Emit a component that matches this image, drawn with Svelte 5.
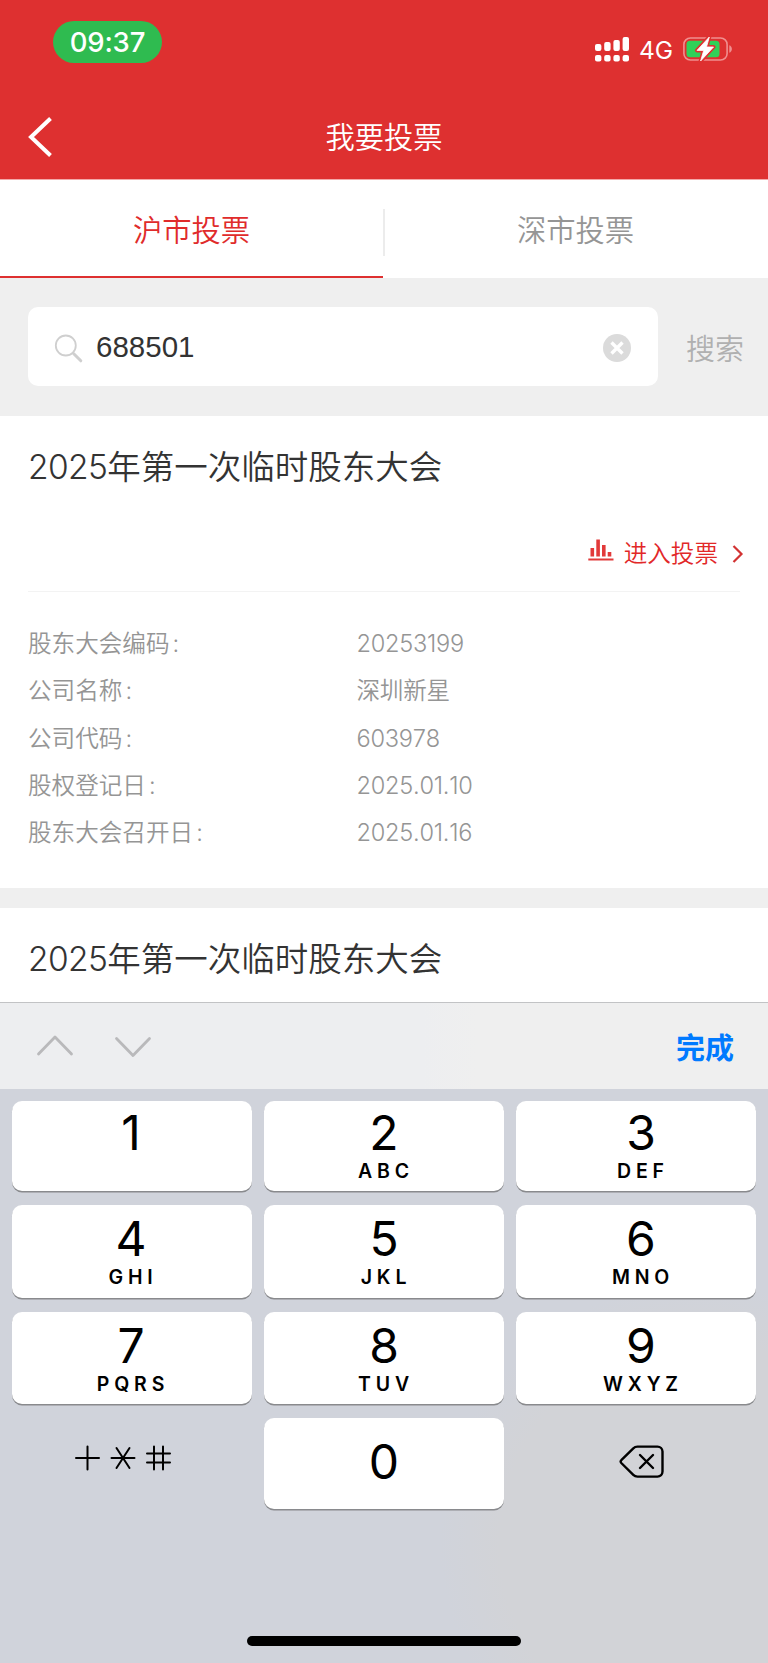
<script lang="ts">
  interface Meeting {
    year: string;
    name: string;
    details: { label: string; value: string }[];
  }

  const tabs = ["沪市投票", "深市投票"];

  const meetings: Meeting[] = [
    {
      year: "2025",
      name: "年第一次临时股东大会",
      details: [
        { label: "股东大会编码", value: "20253199" },
        { label: "公司名称", value: "深圳新星" },
        { label: "公司代码", value: "603978" },
        { label: "股权登记日", value: "2025.01.10" },
        { label: "股东大会召开日", value: "2025.01.16" },
      ],
    },
    { year: "2025", name: "年第一次临时股东大会", details: [] },
  ];

  const keys = [
    { digit: "1", letters: "" },
    { digit: "2", letters: "ABC" },
    { digit: "3", letters: "DEF" },
    { digit: "4", letters: "GHI" },
    { digit: "5", letters: "JKL" },
    { digit: "6", letters: "MNO" },
    { digit: "7", letters: "PQRS" },
    { digit: "8", letters: "TUV" },
    { digit: "9", letters: "WXYZ" },
  ];

  let activeTab = $state(0);
  let code = $state("688501");

  function press(digit: string) {
    code += digit;
  }
</script>

<div class="screen">
  <header>
    <div class="status-bar">
      <span class="clock">09:37</span>
      <div class="status-icons">
        <svg class="signal" width="35" height="25" viewBox="0 0 35 25" fill="#fff">
          <rect x="0" y="7" width="6.4" height="7" rx="2" />
          <rect x="9.2" y="5" width="6.4" height="9" rx="2" />
          <rect x="18.4" y="3" width="6.4" height="11" rx="2" />
          <rect x="27.6" y="0" width="6.4" height="14" rx="2" />
          <rect x="0" y="18" width="6.4" height="6.4" rx="2" />
          <rect x="9.2" y="18" width="6.4" height="6.4" rx="2" />
          <rect x="18.4" y="18" width="6.4" height="6.4" rx="2" />
          <rect x="27.6" y="18" width="6.4" height="6.4" rx="2" />
        </svg>
        <span class="network">4G</span>
        <svg class="battery" width="50" height="26" viewBox="0 0 50 26">
          <rect x="0.9" y="2" width="43.2" height="22" rx="6.5" fill="none" stroke="#f08f8f" stroke-width="1.6" />
          <path d="M46.3 9.3c1.6.5 2.6 2 2.6 3.7s-1 3.2-2.6 3.7z" fill="#f08f8f" />
          <rect x="3.5" y="4.8" width="33" height="16.4" rx="3.5" fill="#30d158" />
          <path d="M26.3 1 14 14.4h6.7L17.6 25l12.9-14h-7z" fill="#fff" stroke="#de3030" stroke-width="4" stroke-linejoin="round" />
          <path d="M26.3 1 14 14.4h6.7L17.6 25l12.9-14h-7z" fill="#fff" stroke="#fff" stroke-width="0.8" stroke-linejoin="round" />
        </svg>
      </div>
    </div>
    <div class="nav-bar">
      <button class="back" aria-label="返回">
        <svg width="26" height="42" viewBox="0 0 26 42" fill="none" stroke="#fff" stroke-width="4">
          <path d="M23.5 2.5 4 21l19.5 18.5" />
        </svg>
      </button>
      <h1>我要投票</h1>
    </div>
  </header>

  <nav class="tabs">
    {#each tabs as tab, i}
      <button class="tab" class:active={activeTab === i} onclick={() => (activeTab = i)}>
        {tab}
      </button>
    {/each}
  </nav>

  <div class="search">
    <div class="search-box">
      <svg class="magnifier" width="30" height="30" viewBox="0 0 30 30" fill="none" stroke="#cfcfcf">
        <circle cx="11.8" cy="11.5" r="10" stroke-width="1.8" />
        <path d="M19.5 19.5 26.8 26.8" stroke-width="3" stroke-linecap="round" />
      </svg>
      <span class="query">{code}</span>
      <button class="clear" aria-label="清除" onclick={() => (code = "")}>
        <svg width="28" height="28" viewBox="0 0 28 28">
          <circle cx="14" cy="14" r="14" fill="#dbdbdb" />
          <path d="m8.5 8.5 11 11m0-11-11 11" stroke="#fff" stroke-width="3.4" />
        </svg>
      </button>
    </div>
    <button class="search-button">搜索</button>
  </div>

  <main>
    {#each meetings as meeting}
      <article>
        <h2><span class="year">{meeting.year}</span>{meeting.name}</h2>
        {#if meeting.details.length}
          <div class="enter">
            <svg class="chart" width="26" height="24" viewBox="0 0 26 24" fill="#e23a3a">
              <rect x="2.5" y="9" width="3.6" height="8.5" />
              <rect x="8.3" y="0.5" width="3.6" height="17" />
              <rect x="14" y="6" width="3.6" height="11.5" />
              <rect x="19.7" y="13" width="3.6" height="4.5" />
              <rect x="0.3" y="19.5" width="25.2" height="2" />
            </svg>
            <span>进入投票</span>
            <svg class="arrow" width="12" height="20" viewBox="0 0 12 20" fill="none" stroke="#d23232" stroke-width="2.2">
              <path d="m1.5 2 8 8-8 8" />
            </svg>
          </div>
          <dl>
            {#each meeting.details as row}
              <div class="row">
                <dt>{row.label}<span class="colon">:</span></dt>
                <dd>{row.value}</dd>
              </div>
            {/each}
          </dl>
        {/if}
      </article>
    {/each}
  </main>

  <section class="keyboard">
    <div class="toolbar">
      <svg width="116" height="24" viewBox="0 0 116 24" fill="none" stroke="#b9b9bb" stroke-width="2.8" stroke-linecap="round" stroke-linejoin="round">
        <path d="M2.5 20 19 3l16.5 17" />
        <path d="M80.5 4.5 97 21.5l16.5-17" />
      </svg>
      <button class="done">完成</button>
    </div>
    <div class="pad">
      {#each keys as key}
        <button class="key" onclick={() => press(key.digit)}>
          <span class="digit">{key.digit}</span>
          <span class="letters">{key.letters}</span>
        </button>
      {/each}
      <button class="key plain symbols" aria-label="符号">
        <svg width="96" height="26" viewBox="0 0 96 26" fill="none" stroke="#000" stroke-width="2" stroke-linecap="round">
          <path d="M1 13h23M12.5 1.5v23" />
          <path d="M36.5 13h23M41.5 3l13 20M54.5 3l-13 20" />
          <path d="M72 8.5h23M72 17.5h23M79 1.5v23M88 1.5v23" />
        </svg>
      </button>
      <button class="key zero" onclick={() => press("0")}>
        <span class="digit">0</span>
      </button>
      <button class="key plain" aria-label="删除" onclick={() => (code = code.slice(0, -1))}>
        <svg class="delete" width="46" height="34" viewBox="0 0 46 34" fill="none" stroke="#000" stroke-width="2.4" stroke-linecap="round" stroke-linejoin="round">
          <path d="M18.5 1.6h20a5 5 0 0 1 5 5v20a5 5 0 0 1-5 5h-20q-2.5 0-4.2-1.7L2.3 18q-1.3-1.4 0-2.8L14.3 3.3q1.7-1.7 4.2-1.7z" />
          <path d="m21 10 13 13m0-13-13 13" />
        </svg>
      </button>
    </div>
    <div class="home-indicator"></div>
  </section>
</div>

<style>
  :global(body) {
    margin: 0;
  }

  .screen {
    width: 768px;
    height: 1663px;
    display: flex;
    flex-direction: column;
    overflow: hidden;
    background: #fff;
    color: #333;
    font-family: Inter, "Noto Sans CJK SC", sans-serif;
    font-weight: 350;
  }

  button {
    padding: 0;
    border: 0;
    background: none;
    font: inherit;
    color: inherit;
  }

  svg {
    display: block;
  }

  header {
    flex: none;
    height: 179px;
    background: #de3030;
    border-bottom: 1px solid #f3a9a9;
    color: #fff;
  }

  .status-bar {
    display: flex;
    justify-content: space-between;
    height: 63px;
    padding: 21px 35px 0 53px;
    box-sizing: border-box;
  }

  .clock {
    width: 109px;
    height: 42px;
    border-radius: 21px;
    background: #2fbb50;
    font-size: 27.5px;
    font-weight: 500;
    line-height: 42px;
    letter-spacing: -0.2px;
    text-align: center;
  }

  .status-icons {
    display: flex;
    align-items: flex-start;
    padding-top: 15px;
  }

  .signal {
    margin-top: 1px;
  }

  .network {
    width: 43px;
    margin: 0 1px 0 9px;
    font-size: 24.5px;
    font-weight: 400;
    line-height: 29px;
  }

  .nav-bar {
    display: grid;
    grid-template-columns: 80px 1fr 80px;
    align-items: center;
    height: 84px;
    padding-top: 32px;
  }

  .back {
    margin-left: 27px;
    justify-self: start;
  }

  h1 {
    margin: 1px 0 0;
    font-size: 29.3px;
    font-weight: 350;
    line-height: 42px;
    text-align: center;
  }

  .tabs {
    flex: none;
    display: flex;
    height: 98px;
  }

  .tab {
    width: 383px;
    position: relative;
    border-bottom: 2px solid transparent;
    font-size: 29.3px;
    color: #959595;
  }

  .tab.active {
    border-color: #de3030;
    color: #e02b2b;
  }

  .tab + .tab {
    width: 385px;
  }

  .tab + .tab::before {
    content: "";
    position: absolute;
    left: 0;
    top: 29px;
    width: 2px;
    height: 47px;
    background: #ececec;
  }

  .search {
    flex: none;
    display: flex;
    align-items: center;
    height: 138px;
    padding: 0 24px 1px 28px;
    box-sizing: border-box;
    background: #efefef;
  }

  .search-box {
    display: flex;
    align-items: center;
    width: 630px;
    height: 79px;
    padding: 0 27px 0 26px;
    box-sizing: border-box;
    border-radius: 10px;
    background: #fff;
  }

  .magnifier {
    margin-top: 4px;
  }

  .query {
    flex: 1;
    margin-left: 12px;
    font-family: "Liberation Sans", sans-serif;
    font-size: 29.5px;
    line-height: 40px;
  }

  .clear {
    margin-top: 3px;
  }

  .search-button {
    margin-left: auto;
    font-size: 29px;
    color: #b0b0b0;
  }

  main {
    flex: none;
    height: 586px;
    overflow: hidden;
    background: #efefef;
  }

  article {
    margin-bottom: 20px;
    padding: 26px 28px 32px;
    background: #fff;
  }

  h2 {
    margin: 0;
    font-size: 33.5px;
    font-weight: 350;
    line-height: 50px;
  }

  .year {
    letter-spacing: -0.6px;
  }

  .enter {
    display: flex;
    align-items: center;
    justify-content: flex-end;
    height: 99px;
    border-bottom: 1px solid #f3f3f3;
    font-size: 23.6px;
    color: #e22828;
  }

  .enter span {
    margin: 24px 14px 0 10px;
    line-height: 36px;
  }

  .chart {
    margin-top: 18px;
  }

  .arrow {
    margin: 24px -4px 0 0;
  }

  dl {
    margin: 0;
    padding-top: 28px;
  }

  .row {
    display: flex;
    height: 47.25px;
    font-size: 23.6px;
    line-height: 47.25px;
    color: #959595;
  }

  .colon {
    margin-left: 3px;
  }

  dt {
    width: 328.5px;
  }

  dd {
    margin: 0;
    letter-spacing: -0.25px;
    font-kerning: none;
  }

  .keyboard {
    flex: 1;
    display: flex;
    flex-direction: column;
    background: radial-gradient(circle at 700px 540px, #d2d3d7 200px, #d0d3db 260px);
    color: #000;
  }

  .toolbar {
    display: flex;
    align-items: center;
    justify-content: space-between;
    height: 87px;
    padding: 0 34px 0 36px;
    box-sizing: border-box;
    border-top: 1px solid #c2c3c5;
    background: linear-gradient(90deg, #edeef0 55%, #efefef 62%);
  }

  .toolbar svg {
    margin-top: -1px;
  }

  .done {
    font-size: 29px;
    font-weight: 600;
    color: #007aff;
  }

  .pad {
    display: grid;
    grid-template-columns: repeat(3, 240px);
    grid-template-rows: 90.5px 92.5px 92.5px 91px;
    gap: 14px 12px;
    padding: 11.5px 12px 0;
  }

  .key {
    display: flex;
    flex-direction: column;
    align-items: center;
    border-radius: 10px;
    background: #fff;
    box-shadow: 0 1.5px 0 #898a8d;
  }

  .key:nth-child(3n + 1) {
    padding-right: 2px;
  }

  .key:nth-child(3n) {
    padding-left: 10px;
  }

  .digit {
    height: 48px;
    margin-top: 8px;
    font-size: 48px;
    font-weight: 400;
    line-height: 48px;
  }

  .key:nth-child(n + 4) .digit {
    margin-top: 10px;
  }

  .key.zero .digit {
    margin-top: 20px;
  }

  .letters {
    height: 24px;
    margin-top: 2px;
    padding-left: 4px;
    font-size: 19.5px;
    font-weight: 600;
    line-height: 24px;
    letter-spacing: 4.8px;
  }

  .key.plain {
    background: none;
    box-shadow: none;
    justify-content: center;
  }

  .symbols svg {
    margin: -12px 16px 0 0;
  }

  .delete {
    margin: -4px 0 0 1px;
  }

  .home-indicator {
    width: 274px;
    height: 10px;
    margin: auto auto 17px;
    border-radius: 5px;
    background: #000;
  }
</style>
